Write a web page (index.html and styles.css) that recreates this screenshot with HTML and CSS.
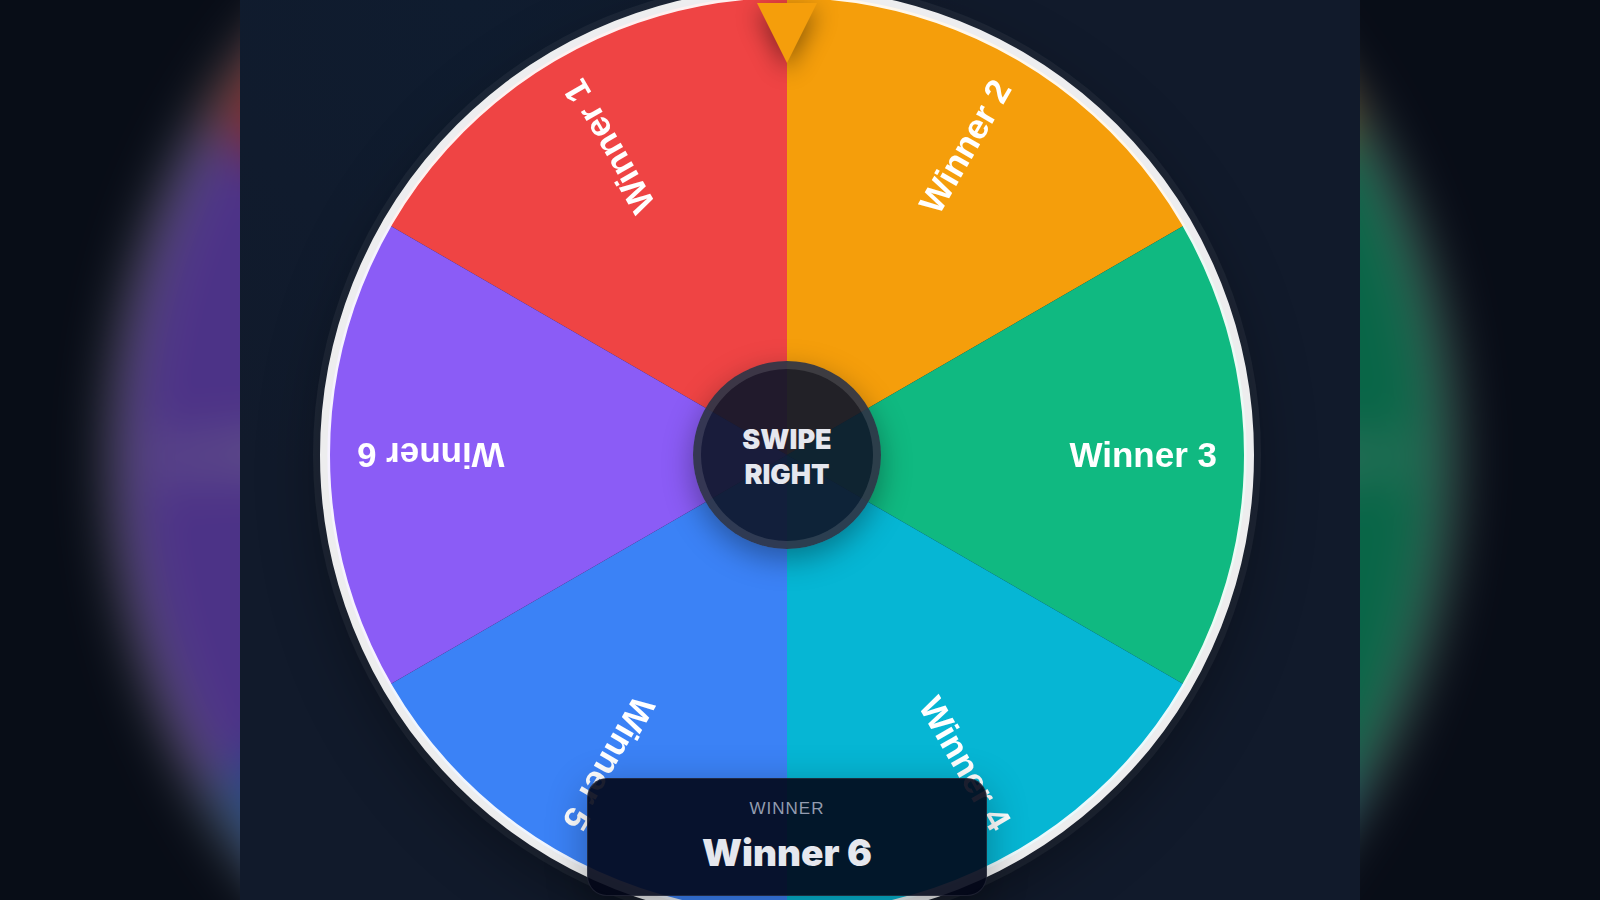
FILE: index.html
```html
<!DOCTYPE html>
<html lang="en">
<head>
    <meta charset="UTF-8">
    <meta name="viewport" content="width=device-width, initial-scale=1.0">
    <title>Spin the Wheel</title>
    <link rel="stylesheet" href="styles.css">
</head>
<body>
    <!-- wheel, centre at 0,0 -->
    <svg class="defs" aria-hidden="true">
        <defs>
            <g id="wheel">
                <g id="slices">
                    <path fill="#ef4444" d="M0 0L-398 -230A460 460 0 0 1 0 -460Z"/>
                    <path fill="#f59e0b" d="M0 0V-460A460 460 0 0 1 398 -230Z"/>
                    <path fill="#10b981" d="M0 0L398 -230A460 460 0 0 1 398 230Z"/>
                    <path fill="#06b6d4" d="M0 0L398 230A460 460 0 0 1 0 460Z"/>
                    <path fill="#3b82f6" d="M0 0V460A460 460 0 0 1 -398 230Z"/>
                    <path fill="#8b5cf6" d="M0 0L-398 230A460 460 0 0 1 -398 -230Z"/>
                </g>
                <circle class="rim" r="462"/>
                <g class="slice-label">
                    <text x="430" y="12" transform="rotate(-120)">Winner 1</text>
                    <text x="430" y="12" transform="rotate(-60)">Winner 2</text>
                    <text x="430" y="12">Winner 3</text>
                    <text x="430" y="12" transform="rotate(60)">Winner 4</text>
                    <text x="430" y="12" transform="rotate(120)">Winner 5</text>
                    <text x="430" y="12" transform="rotate(180)">Winner 6</text>
                </g>
            </g>
        </defs>
    </svg>

    <div class="backdrop" aria-hidden="true">
        <svg class="backdrop-wheel" viewBox="-480 -480 960 960"><use href="#wheel"/></svg>
    </div>

    <main class="stage">
        <svg class="wheel" viewBox="-480 -480 960 960" role="img" aria-label="Prize wheel">
            <circle class="halo" r="474"/>
            <use href="#wheel"/>
            <path class="pointer" d="M-30 -452H30L0 -392Z"/>
        </svg>
        <button class="hub" type="button">SWIPE<br>RIGHT</button>
        <section class="result">
            <p class="result-label">WINNER</p>
            <p class="result-name">Winner 6</p>
        </section>
    </main>
</body>
</html>
```

FILE: styles.css
```css
* {
    box-sizing: border-box;
}
body {
    margin: 0;
    height: 100vh;
    overflow: hidden;
    position: relative;
    display: flex;
    justify-content: center;
    background: #080d17;
    font-family: Arial, "Liberation Sans", sans-serif;
}
.defs {
    position: absolute;
    width: 0;
    height: 0;
}

/* blurred copy behind the stage */
.backdrop {
    position: absolute;
    inset: 0;
    display: flex;
    align-items: center;
    justify-content: center;
    padding: 14px 36px 0 0;
    overflow: hidden;
}
.backdrop-wheel {
    flex: none;
    width: 86vw;
    height: 86vw;
    filter: blur(26px) brightness(0.55);
}

.stage {
    position: relative;
    width: 70%;
    height: 100%;
    display: flex;
    align-items: center;
    justify-content: center;
    padding: 10px 26px 0 0;
    overflow: hidden;
    background: radial-gradient(circle at 20% 0, #0f1c2f, #111a2b 40%);
}
.wheel {
    flex: none;
    width: 60vw;
    height: 60vw;
    overflow: visible;
    filter: drop-shadow(0 20px 30px rgba(0, 0, 0, 0.35));
}
.halo {
    fill: rgba(255, 255, 255, 0.05);
}
.rim {
    fill: none;
    stroke: rgba(255, 255, 255, 0.92);
    stroke-width: 10px;
}
.slice-label {
    fill: #fff;
    font-family: Arial, "Liberation Sans", sans-serif;
    font-size: 35px;
    font-weight: bold;
    text-anchor: end;
}
.pointer {
    fill: #f59e0b;
    filter: drop-shadow(0 8px 12px rgba(0, 0, 0, 0.45));
}

/* sits over the middle of the wheel */
.hub {
    position: absolute;
    top: calc(50% + 5px);
    left: calc(50% - 13px);
    transform: translate(-50%, -50%);
    width: 188px;
    height: 188px;
    padding: 3px 0 0;
    border: 8px solid rgba(255, 255, 255, 0.12);
    border-radius: 50%;
    background: rgba(15, 23, 42, 0.92);
    box-shadow: 0 10px 30px rgba(0, 0, 0, 0.35);
    color: #e5e7ee;
    font-family: "Arial Black", Inter, sans-serif;
    font-size: 27px;
    font-weight: 900;
    line-height: 35px;
    cursor: pointer;
}

.result {
    position: absolute;
    bottom: 4px;
    left: calc(50% - 13px);
    transform: translateX(-50%);
    width: 400px;
    padding: 18px 24px 20px;
    border: 1px solid rgba(255, 255, 255, 0.1);
    border-radius: 20px;
    background: rgba(2, 6, 23, 0.9);
    box-shadow: 0 10px 40px rgba(0, 0, 0, 0.3);
    text-align: center;
}
.result p {
    margin: 0;
}
.result-label {
    color: #939caf;
    font-size: 17px;
    line-height: 24px;
    letter-spacing: 1px;
}
.result .result-name {
    margin-top: 10px;
    color: #e5e7ee;
    font-family: "Arial Black", Inter, sans-serif;
    font-size: 37px;
    font-weight: 900;
    line-height: 44px;
}
```
